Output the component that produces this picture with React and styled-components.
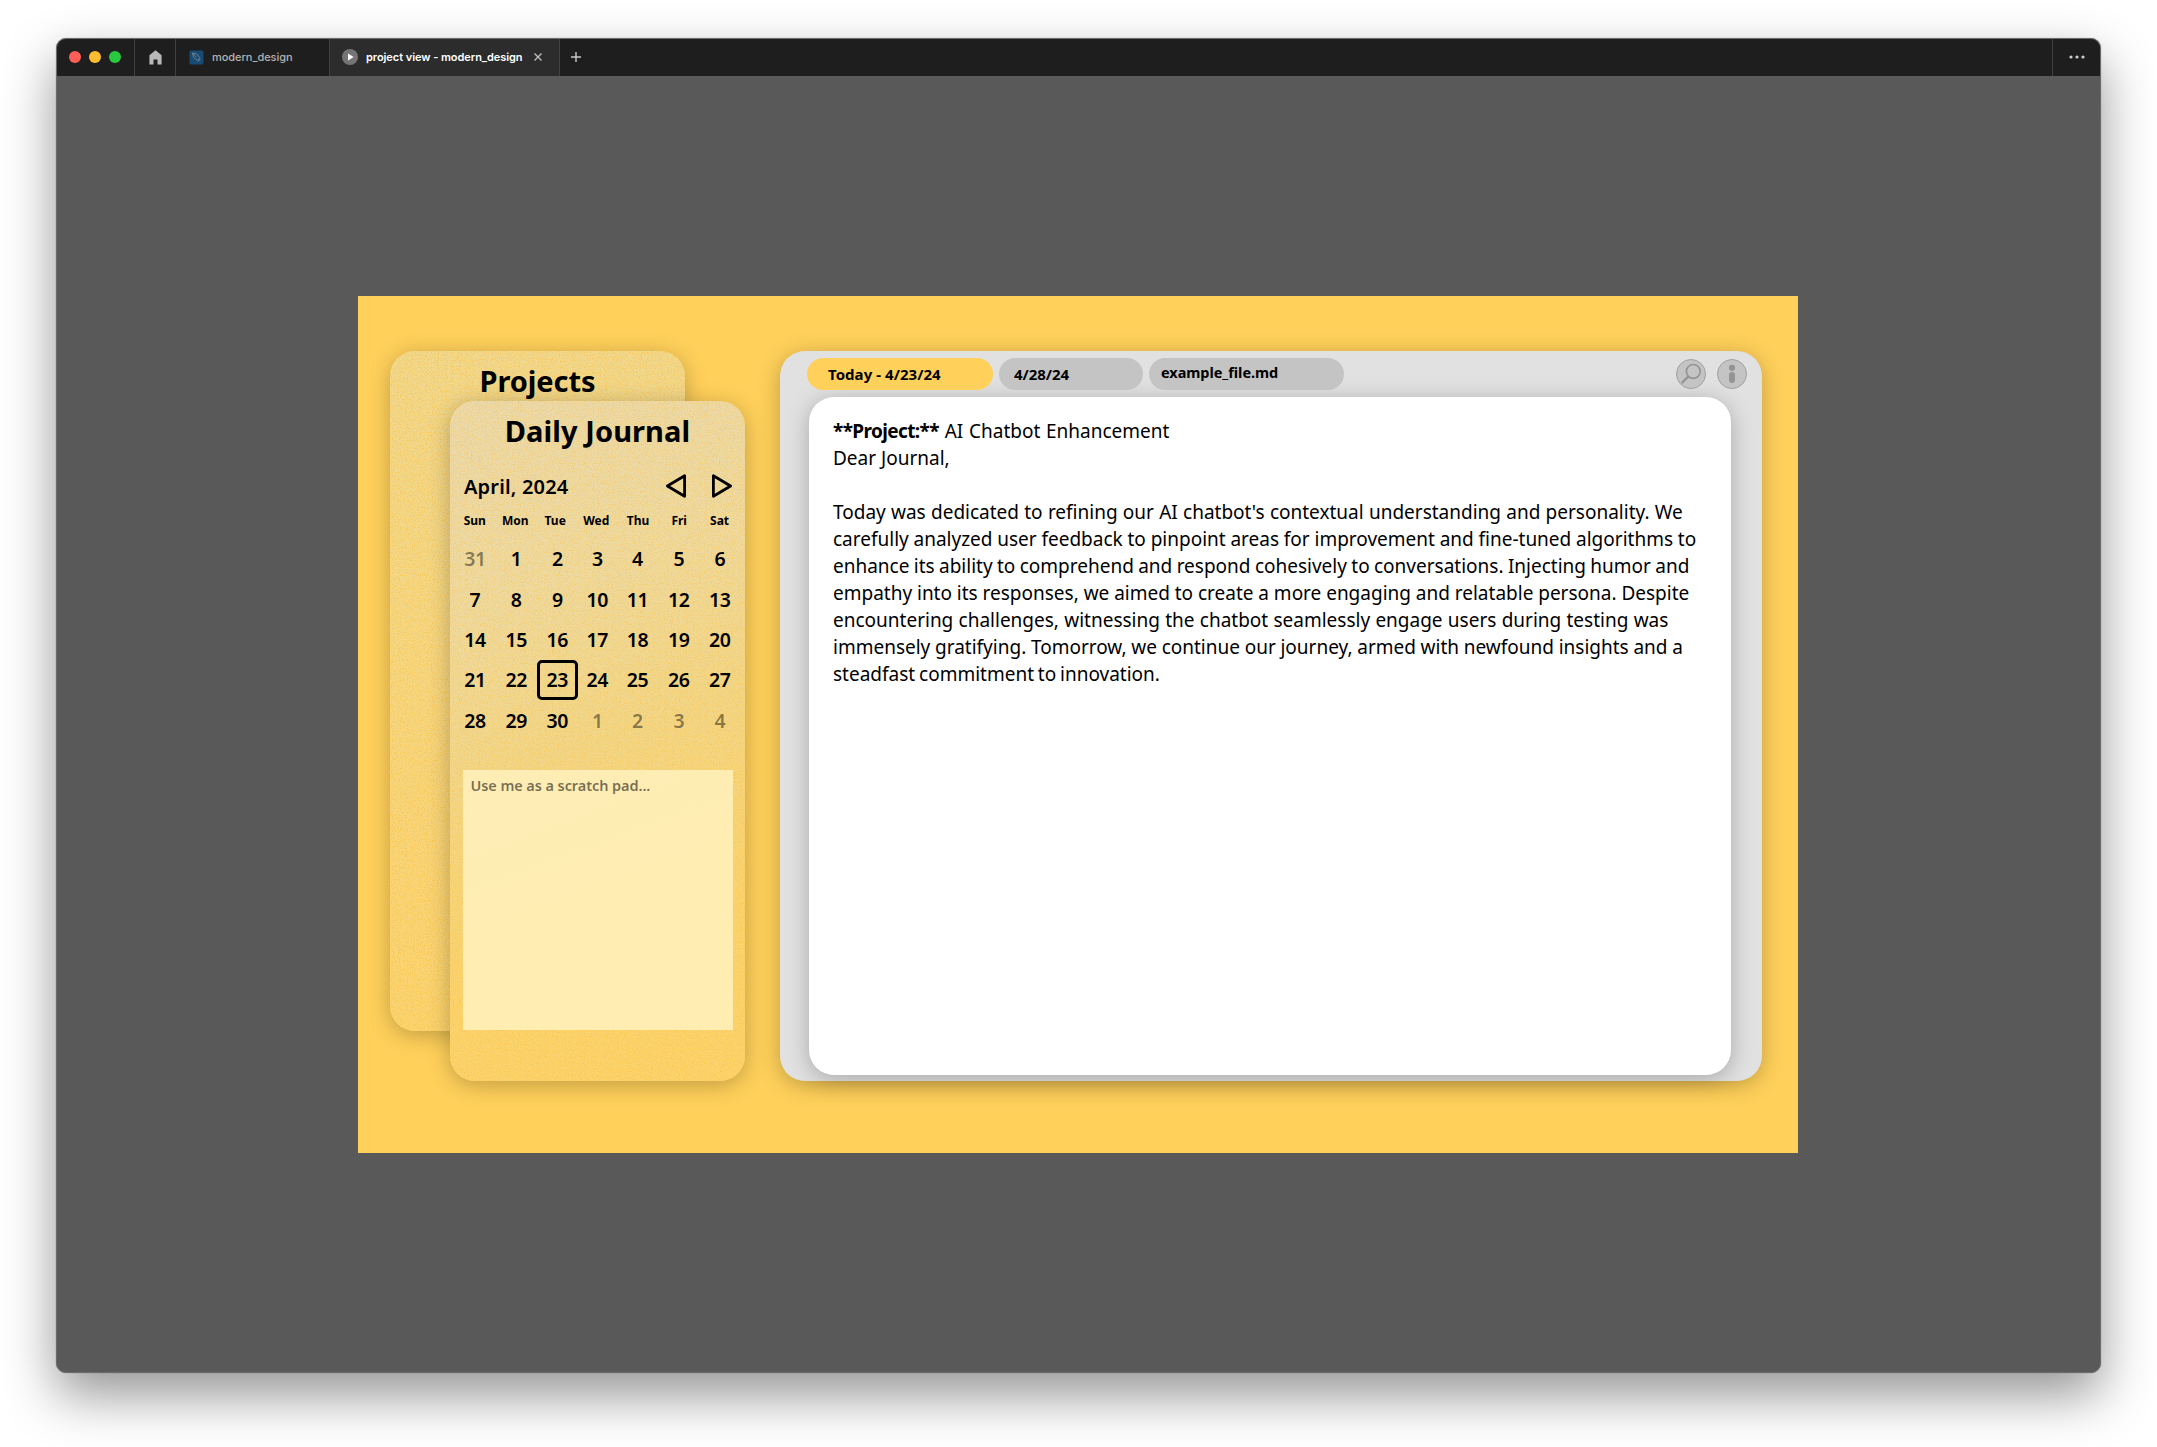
import React from "react";
import styled, { createGlobalStyle } from "styled-components";

const GlobalStyle = createGlobalStyle`
  *, *::before, *::after { box-sizing: border-box; }
  body {
    margin: 0;
    background: #fff;
    color: #000;
    font-family: "Noto Sans", "Open Sans", sans-serif;
  }
`;

const Desktop = styled.div`
  height: 1447px;
  padding: 38px 56px 0;
  overflow: hidden;
`;

const Window = styled.div`
  display: flex;
  flex-direction: column;
  width: 2045px;
  height: 1335px;
  border: 1px solid #6c6c6c;
  border-radius: 10px;
  background: #595959;
  overflow: hidden;
  box-shadow: 0 22px 52px rgba(0, 0, 0, 0.42), 0 0 1px rgba(0, 0, 0, 0.5);
`;

const TitleBar = styled.div`
  display: flex;
  flex: none;
  height: 37px;
  background: #1e1e1e;
  font-family: Inter, sans-serif;
  font-size: 11px;
`;

const BarCell = styled.div`
  display: flex;
  align-items: center;
  flex: none;
  gap: ${(p) => p.$gap || 0}px;
  width: ${(p) => p.$width}px;
  padding-left: ${(p) => p.$pad || 0}px;
  padding-bottom: 1px;
  border-right: 1px solid #414141;
  background: ${(p) => (p.$active ? "#2c2c2c" : "transparent")};
  color: ${(p) => (p.$active ? "#fff" : "#b3b3b3")};
  font-weight: ${(p) => (p.$active ? 600 : 500)};
  letter-spacing: -0.05px;
  white-space: nowrap;
`;

const BarEnd = styled(BarCell)`
  margin-left: auto;
  border-right: 0;
  border-left: 1px solid #414141;
`;

const BarButton = styled.div`
  display: flex;
  align-items: center;
  padding: 0 0 1px 11px;
`;

const Light = styled.span`
  width: 12px;
  height: 12px;
  border-radius: 50%;
  background: ${(p) => p.$color};
`;

const Icon = styled.svg`
  display: block;
  flex: none;
`;

const CloseIcon = styled(Icon)`
  margin-left: 3px;
`;

const Canvas = styled.div`
  display: flex;
  align-items: center;
  flex: 1;
  padding-left: 301px;
`;

const Stage = styled.div`
  display: flex;
  gap: 35px;
  width: 1440px;
  height: 857px;
  padding: 55px 0 0 32px;
  background: #ffd05a;
`;

const Stack = styled.div`
  display: grid;
  align-content: start;
  width: 355px;
  & > * {
    grid-area: 1 / 1;
  }
`;

const Card = styled.section`
  position: relative;
  width: 295px;
  height: 680px;
  padding-top: 10px;
  border-radius: 25px;
  overflow: hidden;
  isolation: isolate;
  background: linear-gradient(172deg, #f1d88f 0%, #f4d786 35%, #f9d478 75%, #fbd470 100%);
  box-shadow: 0 4px 22px rgba(0, 0, 0, 0.25);
`;

const JournalCard = styled(Card)`
  margin: 50px 0 0 60px;
  background: linear-gradient(160deg, #ebd9ad 0%, #eed9a0 28%, #f2d688 50%, #fad370 75%, #fcd36c 100%);
`;

const Grain = styled.svg`
  position: absolute;
  inset: 0;
  z-index: -1;
  width: 100%;
  height: 100%;
  opacity: ${(p) => p.$strength};
`;

const CardTitle = styled.h2`
  margin: 0;
  font-size: 29px;
  font-weight: 700;
  line-height: 40px;
  letter-spacing: ${(p) => p.$track}px;
  text-align: center;
`;

const MonthRow = styled.div`
  display: flex;
  align-items: center;
  justify-content: space-between;
  height: 28px;
  margin-top: 21px;
  padding: 0 12px 0 14px;
  font-size: 20px;
  font-weight: 600;
  line-height: 28px;
  letter-spacing: 0.18px;
`;

const MonthName = styled.span`
  padding-top: 2px;
`;

const Week = styled.div`
  display: grid;
  grid-template-columns: ${(p) => p.$columns};
  padding-left: 4.4px;
  text-align: center;
`;

const WeekNames = styled(Week)`
  margin: 13px 0 10px;
  font-size: 12px;
  font-weight: 700;
  line-height: 16px;
`;

const Day = styled.span`
  display: flex;
  align-items: center;
  justify-content: center;
  height: 40.4px;
  border: 3px solid ${(p) => (p.$today ? "#000" : "transparent")};
  border-radius: 5px;
  color: rgba(0, 0, 0, ${(p) => (p.$muted ? 0.45 : 1)});
  font-size: 19.5px;
  font-weight: 600;
  letter-spacing: -0.4px;
`;

const ScratchPad = styled.div`
  width: 270px;
  height: 260px;
  margin: 30px 0 0 13px;
  padding: 5px 7.5px;
  background: rgba(255, 239, 185, 0.9);
  color: rgba(0, 0, 0, 0.55);
  font-size: 14.5px;
  font-weight: 600;
  line-height: 20px;
  letter-spacing: -0.08px;
`;

const Editor = styled.main`
  width: 982px;
  height: 730px;
  padding-top: 7px;
  border-radius: 25px;
  background: #e1e1e1;
  box-shadow: 0 4px 22px rgba(0, 0, 0, 0.25);
`;

const Toolbar = styled.div`
  display: flex;
  align-items: center;
  gap: 6px;
  height: 32px;
  padding: 0 15px 0 27px;
`;

const FileTab = styled.div`
  width: ${(p) => p.$width}px;
  height: 32px;
  padding: 0 0 ${(p) => p.$lift || 0}px ${(p) => p.$pad}px;
  border-radius: 16px;
  background: ${(p) => (p.$active ? "#ffd05a" : "#c4c4c4")};
  font-size: ${(p) => p.$size || 15}px;
  font-weight: 700;
  line-height: ${(p) => 32 - (p.$lift || 0)}px;
  letter-spacing: ${(p) => (p.$active ? 0.05 : -0.05)}px;
`;

const ToolIcons = styled.div`
  display: flex;
  gap: 11px;
  margin-left: auto;
`;

const Page = styled.article`
  width: 922px;
  height: 678px;
  margin: 7px 0 0 29px;
  padding: 21px 0 0 24px;
  border-radius: 25px;
  background: #fff;
  box-shadow: 0 4px 22px rgba(0, 0, 0, 0.25);
  font-size: 19px;
`;

const Line = styled.div`
  height: 27px;
  line-height: 27px;
  white-space: nowrap;
  word-spacing: ${(p) => p.$space || 0}px;
`;

const Strong = styled.strong`
  font-weight: 700;
  letter-spacing: -0.62px;
`;

const GrainLayer = ({ id, strength }) => (
  <Grain $strength={strength} aria-hidden="true">
    <filter id={id} x="0" y="0" width="100%" height="100%" colorInterpolationFilters="sRGB">
      <feTurbulence type="fractalNoise" baseFrequency="0.85" numOctaves="2" seed="4" />
      <feColorMatrix values="0 0 0 0 0.98  0 0 0 0 0.73  0 0 0 0 0.16  4 0 0 0 -1.95" />
    </filter>
    <rect width="100%" height="100%" filter={`url(#${id})`} />
  </Grain>
);

const nameColumns = "40.8px 40px 40px 42px 41.6px 40.8px 40px";
const dayColumns = "41.2px 41.2px 41px 39px 41.4px 41.4px 40.6px";

const weekdays = ["Sun", "Mon", "Tue", "Wed", "Thu", "Fri", "Sat"];
const days = [
  { n: 31, muted: true },
  ...Array.from({ length: 30 }, (_, i) => ({ n: i + 1 })),
  ...[1, 2, 3, 4].map((n) => ({ n, muted: true })),
];

const entry = [
  ["Today was dedicated to refining our AI chatbot's contextual understanding and personality. We", 0.32],
  ["carefully analyzed user feedback to pinpoint areas for improvement and fine-tuned algorithms to", -0.16],
  ["enhance its ability to comprehend and respond cohesively to conversations. Injecting humor and", -0.58],
  ["empathy into its responses, we aimed to create a more engaging and relatable persona. Despite", -0.08],
  ["encountering challenges, witnessing the chatbot seamlessly engage users during testing was", 0.33],
  ["immensely gratifying. Tomorrow, we continue our journey, armed with newfound insights and a", -0.24],
  ["steadfast commitment to innovation.", -1.1],
];

export default function App() {
  return (
    <>
      <GlobalStyle />
      <Desktop>
        <Window>
          <TitleBar>
            <BarCell $width={78} $pad={12} $gap={8}>
              <Light $color="#ff5f57" />
              <Light $color="#febc2e" />
              <Light $color="#28c840" />
            </BarCell>
            <BarCell $width={41} $pad={14}>
              <Icon width="13" height="15" viewBox="0 0 13 15" fill="#b8b8b8">
                <path d="M6.5 0.2 12.6 5.3V14.6H8.5V9.4H4.5V14.6H0.4V5.3Z" />
              </Icon>
            </BarCell>
            <BarCell $width={154} $pad={13} $gap={8}>
              <Icon width="15" height="15" viewBox="0 0 15 15" fill="none">
                <rect x="0.5" y="0.5" width="14" height="14" rx="2" fill="#174b73" />
                <path
                  d="M3.4 3 7.8 4 10.6 7.6 9.6 10.2 6.6 9.4 4.4 7ZM3.4 3 7.4 7.4M8.6 11.8 11.6 9"
                  stroke="#7f8a94"
                  strokeWidth="0.8"
                />
              </Icon>
              modern_design
            </BarCell>
            <BarCell $active $width={230} $pad={12} $gap={8}>
              <Icon width="16" height="16" viewBox="0 0 16 16">
                <circle cx="8" cy="8" r="8" fill="#757575" />
                <path d="M6 4.6 11.6 8 6 11.4Z" fill="#fff" />
              </Icon>
              project view - modern_design
              <CloseIcon width="8" height="8" viewBox="0 0 8 8" stroke="#c0c0c0" strokeWidth="1.3">
                <path d="M0.5 0.5 7.5 7.5M7.5 0.5 0.5 7.5" />
              </CloseIcon>
            </BarCell>
            <BarButton>
              <Icon width="10" height="10" viewBox="0 0 10 10" stroke="#c8c8c8" strokeWidth="1.4">
                <path d="M5 0V10M0 5H10" />
              </Icon>
            </BarButton>
            <BarEnd $width={48} $pad={16}>
              <Icon width="16" height="4" viewBox="0 0 16 4" fill="#cfcfcf">
                <circle cx="2" cy="2" r="1.6" />
                <circle cx="8" cy="2" r="1.6" />
                <circle cx="14" cy="2" r="1.6" />
              </Icon>
            </BarEnd>
          </TitleBar>

          <Canvas>
            <Stage>
              <Stack>
                <Card>
                  <GrainLayer id="grain-projects" strength={0.5} />
                  <CardTitle $track={-0.1}>Projects</CardTitle>
                </Card>
                <JournalCard>
                  <GrainLayer id="grain-journal" strength={0.4} />
                  <CardTitle $track={0.08}>Daily Journal</CardTitle>
                  <MonthRow>
                    <MonthName>April, 2024</MonthName>
                    <Icon
                      width="68"
                      height="26"
                      viewBox="0 0 68 26"
                      fill="none"
                      stroke="#000"
                      strokeWidth="2.8"
                      strokeLinejoin="round"
                    >
                      <path d="M2.4 13 19.6 2.7V23.3Z" />
                      <path d="M65.6 13 48.4 2.7V23.3Z" />
                    </Icon>
                  </MonthRow>
                  <WeekNames $columns={nameColumns}>
                    {weekdays.map((d) => (
                      <span key={d}>{d}</span>
                    ))}
                  </WeekNames>
                  <Week $columns={dayColumns}>
                    {days.map(({ n, muted }, i) => (
                      <Day key={i} $muted={muted} $today={n === 23}>
                        {n}
                      </Day>
                    ))}
                  </Week>
                  <ScratchPad>Use me as a scratch pad...</ScratchPad>
                </JournalCard>
              </Stack>

              <Editor>
                <Toolbar>
                  <FileTab $active $width={186} $pad={21}>Today - 4/23/24</FileTab>
                  <FileTab $width={144} $pad={15}>4/28/24</FileTab>
                  <FileTab $width={195} $pad={12} $lift={3} $size={14.5}>example_file.md</FileTab>
                  <ToolIcons>
                    <Icon width="30" height="30" viewBox="0 0 30 30" fill="none" stroke="#949494">
                      <circle cx="15" cy="15" r="14.5" fill="#c4c4c4" stroke="#a0a0a0" />
                      <circle cx="17.3" cy="12.4" r="6.9" strokeWidth="1.7" />
                      <path d="M12.4 17.4 5.6 24.2" strokeWidth="2.2" />
                    </Icon>
                    <Icon width="30" height="30" viewBox="0 0 30 30">
                      <circle cx="15" cy="15" r="14.5" fill="#c4c4c4" stroke="#a0a0a0" />
                      <circle cx="15" cy="8.8" r="3.1" fill="#949494" />
                      <rect x="12" y="13" width="6" height="11" rx="3" fill="#949494" />
                    </Icon>
                  </ToolIcons>
                </Toolbar>
                <Page>
                  <Line $space={0.8}>
                    <Strong>**Project:**</Strong> AI Chatbot Enhancement
                  </Line>
                  <Line>Dear Journal,</Line>
                  <Line />
                  {entry.map(([text, space]) => (
                    <Line key={text} $space={space}>
                      {text}
                    </Line>
                  ))}
                </Page>
              </Editor>
            </Stage>
          </Canvas>
        </Window>
      </Desktop>
    </>
  );
}
